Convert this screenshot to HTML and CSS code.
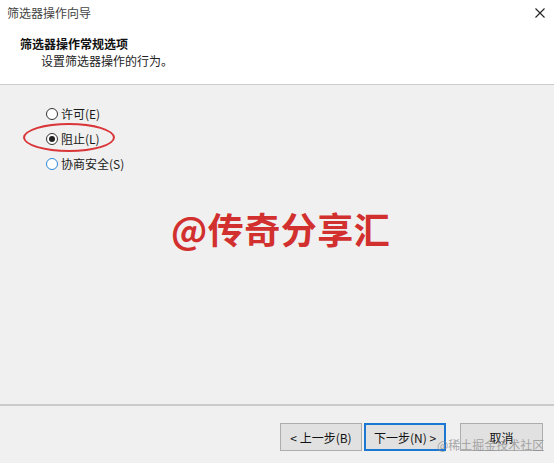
FILE: index.html
```html
<!DOCTYPE html>
<html>
<head>
  <meta charset="utf-8">
  <title>筛选器操作向导</title>
  <link rel="stylesheet" href="styles.css">
</head>
<body>
  <div class="window">
    <div class="header">
      <div class="titlebar">
        <span class="title">筛选器操作向导</span>
        <svg class="close" width="10" height="10" viewBox="0 0 10 10">
          <path d="M0.5 0.5 L9.5 9.5 M9.5 0.5 L0.5 9.5" stroke="#222" stroke-width="1.1" fill="none"/>
        </svg>
      </div>
      <div class="heading">筛选器操作常规选项</div>
      <div class="subtitle">设置筛选器操作的行为。</div>
    </div>

    <div class="content">
      <label class="radio-row">
        <span class="radio"></span>
        <span>许可(E)</span>
      </label>
      <label class="radio-row marked">
        <span class="radio checked"></span>
        <span>阻止(L)</span>
        <span class="ring"></span>
      </label>
      <label class="radio-row">
        <span class="radio hover"></span>
        <span>协商安全(S)</span>
      </label>

      <div class="stamp">@传奇分享汇</div>
    </div>

    <div class="footer">
      <button class="btn">&lt; 上一步(B)</button>
      <button class="btn focused">下一步(N) &gt;</button>
      <button class="btn cancel">取消</button>
      <span class="site-mark">@稀土掘金技术社区</span>
    </div>
  </div>
</body>
</html>
```

FILE: styles.css
```css
* {
  margin: 0;
  padding: 0;
  box-sizing: border-box;
}

body {
  width: 554px;
  height: 463px;
  overflow: hidden;
  background: #f0f0f0;
  font-family: "Noto Sans CJK SC", "Liberation Sans", sans-serif;
  font-size: 12px;
  color: #1a1a1a;
}

.window {
  display: flex;
  flex-direction: column;
  height: 463px;
}

.header {
  height: 85px;
  background: #fff;
  border-bottom: 1px solid #cdcdcd;
}

.titlebar {
  display: flex;
  align-items: center;
  justify-content: space-between;
  height: 22px;
  padding: 3px 9px 0 7px;
}

.title {
  color: #444;
  line-height: 16px;
}

.heading {
  margin: 13px 0 0 20px;
  font-weight: bold;
  line-height: 17px;
  color: #111;
}

.subtitle {
  margin: 0 0 0 41px;
  line-height: 17px;
  color: #222;
}

.content {
  position: relative;
  flex: 1;
  padding: 16px 0 0 46px;
}

.radio-row {
  position: relative;
  display: flex;
  align-items: center;
  gap: 3px;
  height: 25px;
}

.radio {
  position: relative;
  width: 12px;
  height: 12px;
  border: 1px solid #333;
  border-radius: 50%;
  background: #fff;
}

.radio.checked::after {
  content: "";
  position: absolute;
  left: 2px;
  top: 2px;
  width: 6px;
  height: 6px;
  border-radius: 50%;
  background: #222;
}

.radio.hover {
  border-color: #2b86d6;
}

.ring {
  position: absolute;
  left: -23px;
  top: -3px;
  width: 92px;
  height: 29px;
  border: 2px solid #d9363a;
  border-radius: 50%;
}

.stamp {
  position: absolute;
  left: 171px;
  top: 121px;
  font-size: 36px;
  font-weight: bold;
  letter-spacing: 0.5px;
  color: #d2302f;
  line-height: 44px;
}

.footer {
  position: relative;
  display: flex;
  justify-content: flex-end;
  height: 59px;
  padding: 17px 11px 0 0;
  border-top: 2px solid #cbcbcb;
}

.btn {
  width: 82px;
  height: 28px;
  border: 1px solid #adadad;
  background: #e1e1e1;
  font-family: inherit;
  font-size: 12px;
  color: #111;
  margin-left: 2px;
}

.btn.focused {
  border: 2px solid #1a78d2;
}

.btn.cancel {
  margin-left: 14px;
  width: 83px;
}

.site-mark {
  position: absolute;
  left: 437px;
  top: 30px;
  font-size: 12px;
  color: rgba(140, 140, 140, 0.75);
  white-space: nowrap;
}
```
